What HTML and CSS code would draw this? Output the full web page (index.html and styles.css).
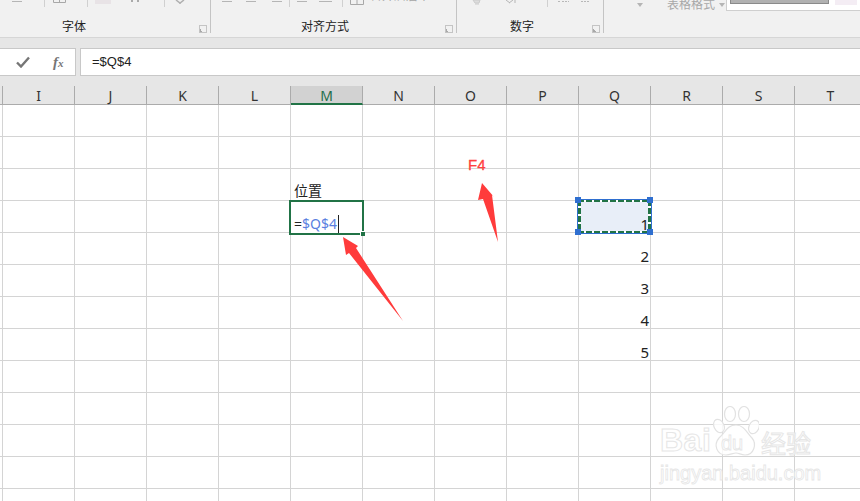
FILE: index.html
```html
<!DOCTYPE html>
<html lang="zh-CN">
<head>
  <meta charset="UTF-8">
  <meta name="viewport" content="width=device-width, initial-scale=1.0">
  <title>Excel F4</title>
  <link rel="stylesheet" href="styles.css">
</head>
<body>

  <!-- Ribbon, cut off at the top -->
  <div class="ribbon">
    <div class="group group-font">
      <svg class="tools" width="210" height="19">
        <path d="M12 1.5h10" stroke="#b5b5b5" fill="none"/>
        <path d="M44.5 0v7M87.5 0v7M164.5 0v7" stroke="#d0d0d0" fill="none"/>
        <path d="M53.5 0v2.5h12V0M59.5 0v2.5" stroke="#a8a8a8" fill="none"/>
        <rect x="95" y="0" width="16" height="4" fill="#e8e3e6"/>
        <path d="M132 0v2M138 0v2" stroke="#aaa" stroke-width="2" fill="none"/>
        <path d="M176 0l4 3 4-3M180 3v1" stroke="#b0b0b0" stroke-width="1.5" fill="none"/>
      </svg>
      <div class="group-label">字体</div>
      <span class="launcher"></span>
    </div>
    <div class="group group-align">
      <svg class="tools" width="160" height="19">
        <path d="M11 1.5h10M35 1.5h10M61 1.5h10" stroke="#b5b5b5" fill="none"/>
        <path d="M78.5 0v7M131.5 0v7" stroke="#d0d0d0" fill="none"/>
        <path d="M86 1.5h10M108 1.5h13" stroke="#b5b5b5" fill="none"/>
        <path d="M139.5 0v4.5h13V0M146 0v4.5" stroke="#a8a8a8" fill="none"/>
      </svg>
      <span class="merge-label">合并后居中</span>
      <div class="group-label">对齐方式</div>
      <span class="launcher"></span>
    </div>
    <div class="group group-number">
      <svg class="tools" width="146" height="19">
        <path d="M16 0h7l-1 3h-4zM18 4h4" stroke="#ccc" fill="#ddd"/>
        <path d="M49 0l4 3M58 0v3M52 3l4-3" stroke="#b5b5b5" fill="none"/>
        <path d="M90.5 0v7" stroke="#d0d0d0" fill="none"/>
        <path d="M101 1.5h2M105 1.5h7M124 1.5h8" stroke="#b8b8b8" stroke-dasharray="2 1" fill="none"/>
      </svg>
      <div class="group-label">数字</div>
      <span class="launcher"></span>
    </div>
    <div class="group-styles">
      <span class="caret-down first-caret"></span>
      <span class="table-format">表格格式</span>
      <span class="caret-down"></span>
      <div class="gallery">
        <span class="gallery-gray"></span>
        <span class="gallery-pink"></span>
      </div>
    </div>
  </div>

  <!-- Formula bar -->
  <div class="formula-bar">
    <div class="formula-buttons">
      <svg width="14" height="12" viewBox="0 0 14 12"><path d="M1 6.5l4 4L13 1.5" stroke="#767676" stroke-width="2.4" fill="none"/></svg>
      <span class="fx">f<small>x</small></span>
    </div>
    <div class="formula-input">=$Q$4</div>
  </div>

  <!-- Column headers -->
  <div class="col-headers">
    <span class="col-stub"></span>
    <span class="col-head">I</span>
    <span class="col-head">J</span>
    <span class="col-head">K</span>
    <span class="col-head">L</span>
    <span class="col-head col-active">M</span>
    <span class="col-head">N</span>
    <span class="col-head">O</span>
    <span class="col-head">P</span>
    <span class="col-head">Q</span>
    <span class="col-head">R</span>
    <span class="col-head">S</span>
    <span class="col-head">T</span>
  </div>

  <!-- Cells -->
  <div class="sheet">
    <div class="cell col-m row-3">位置</div>
    <div class="cell col-m row-4">
      <div class="edit-box">
        <span class="edit-eq">=</span><span class="edit-ref">$Q$4</span><span class="edit-caret"></span>
        <span class="fill-handle"></span>
      </div>
    </div>
    <div class="cell num col-q row-4">
      <div class="marching">
        <span class="handle h-tl"></span>
        <span class="handle h-tr"></span>
        <span class="handle h-bl"></span>
        <span class="handle h-br"></span>
      </div>
      <span class="num-text">1</span>
    </div>
    <div class="cell num col-q row-5">2</div>
    <div class="cell num col-q row-6">3</div>
    <div class="cell num col-q row-7">4</div>
    <div class="cell num col-q row-8">5</div>

    <!-- Annotations on top of the sheet -->
    <div class="f4-note">F4</div>
    <svg class="arrows" width="860" height="396" viewBox="0 105 860 396">
      <polygon points="343,237 358,246 356,248 403,321 349,253 346,255" fill="#ff3b3b"/>
      <polygon points="482,183 494,197 492,195 498,242 483,199 478,200" fill="#ff3b3b"/>
    </svg>

    <!-- Watermark -->
    <div class="watermark">
      <div class="wm-top">
        <span class="wm-bai">Bai</span>
        <div class="wm-paw">
          <svg width="46" height="52" viewBox="0 0 46 52">
            <g fill="#fff" fill-opacity="0.8" stroke="#e2e2e2" stroke-width="1.2">
              <ellipse cx="6" cy="20" rx="5" ry="7" transform="rotate(-25 6 20)"/>
              <ellipse cx="17" cy="8" rx="5.5" ry="7.5"/>
              <ellipse cx="31" cy="8" rx="5.5" ry="7.5"/>
              <ellipse cx="41" cy="21" rx="5" ry="7" transform="rotate(25 41 21)"/>
              <path d="M23 19c8 0 11 8 16 13 5 6 2 17-7 17-4 0-6-2-9-2s-6 2-10 2C4 49 0 39 6 32c6-5 8-13 17-13z"/>
            </g>
          </svg>
          <span class="wm-du">du</span>
        </div>
        <span class="wm-cn">经验</span>
      </div>
      <div class="wm-url">jingyan.baidu.com</div>
    </div>
  </div>

</body>
</html>
```

FILE: styles.css
```css
html, body {
  margin: 0;
  padding: 0;
}
body {
  width: 860px;
  height: 501px;
  overflow: hidden;
  background-color: #fff;
  font-family: "Noto Sans", "Noto Sans CJK SC", sans-serif;
  color: #222;
}

/* ribbon */
.ribbon {
  display: flex;
  height: 37px;
  background-color: #f1f1f1;
  border-bottom: 1px solid #d6d6d6;
  overflow: hidden;
}
.group {
  position: relative;
  height: 33px;
  border-right: 1px solid #c4c4c4;
}
.group-font { width: 210px; }
.group-align { width: 245px; }
.group-number { width: 146px; }
.group-font .group-label { padding-right: 62px; }
.group-align .group-label { padding-right: 17px; }
.group-number .group-label { padding-right: 16px; }
.tools {
  display: block;
}
.group-label {
  position: absolute;
  left: 0;
  right: 0;
  bottom: -1px;
  text-align: center;
  font-size: 12px;
  line-height: 14px;
}
.launcher {
  position: absolute;
  right: 3px;
  bottom: 0;
  width: 6px;
  height: 6px;
  border: 1px solid #c4c4c4;
  background: linear-gradient(45deg, #a8a8a8 0 25%, transparent 25%);
}
.merge-label {
  position: absolute;
  left: 159px;
  top: -11px;
  font-size: 12px;
  line-height: 14px;
  color: #a5a5a5;
  white-space: nowrap;
}
.group-styles {
  flex: 1;
  display: flex;
  align-items: flex-start;
}
.first-caret {
  margin-left: 33px;
  margin-right: 24px;
}
.caret-down {
  width: 0;
  height: 0;
  margin-top: 3px;
  border-left: 3.5px solid transparent;
  border-right: 3.5px solid transparent;
  border-top: 4px solid #b5b5b5;
}
.table-format {
  font-size: 12px;
  line-height: 12px;
  color: #a8a8a8;
  margin-right: 4px;
  margin-top: -1px;
}
.caret-down:not(.first-caret) {
  margin-right: 1px;
}
.gallery {
  flex: 1;
  display: flex;
  align-items: flex-start;
  height: 10px;
  background-color: #fff;
  border-left: 1px solid #cfcfcf;
  border-bottom: 1px solid #cfcfcf;
}
.gallery-gray {
  width: 97px;
  height: 3px;
  margin-left: 3px;
  background-color: #b1b1b1;
  border: 1px solid #8a8a8a;
  border-top: none;
}
.gallery-pink {
  width: 22px;
  height: 5px;
  margin-left: 6px;
  background-color: #f4edf4;
}

/* formula bar */
.formula-bar {
  display: flex;
  gap: 4px;
  height: 48px;
  padding: 10px 0;
  box-sizing: border-box;
  background-color: #e6e6e6;
}
.formula-buttons {
  display: flex;
  align-items: center;
  width: 76px;
  height: 28px;
  box-sizing: border-box;
  padding-left: 16px;
  gap: 23px;
  background-color: #fff;
  border: 1px solid #c8c8c8;
  border-left: none;
}
.fx {
  font-family: "Liberation Serif", serif;
  font-style: italic;
  font-weight: bold;
  font-size: 15px;
  color: #767676;
}
.fx small {
  font-size: 11px;
}
.formula-input {
  flex: 1;
  height: 28px;
  box-sizing: border-box;
  padding-left: 11px;
  font-family: "Liberation Sans", sans-serif;
  font-size: 13px;
  line-height: 25px;
  background-color: #fff;
  border: 1px solid #c8c8c8;
  border-right: none;
}

/* column headers */
.col-headers {
  display: grid;
  grid-template-columns: 3px repeat(12, 72px);
  height: 19px;
  box-sizing: border-box;
  background-color: #e6e6e6;
  border-bottom: 1px solid #ababab;
}
.col-stub {
  border-right: 1px solid #ababab;
}
.col-head {
  height: 18px;
  box-sizing: border-box;
  text-align: center;
  font-size: 14px;
  line-height: 19px;
  color: #333;
  border-right: 1px solid #ababab;
}
.col-active {
  background-color: #d2d2d2;
  color: #1f6e4a;
  border-bottom: 2px solid #217346;
  height: 19px;
}

/* sheet */
.sheet {
  position: relative;
  display: grid;
  grid-template-columns: 3px repeat(12, 72px);
  grid-template-rows: repeat(13, 32px);
  height: 396px;
  overflow: hidden;
  background-image:
    linear-gradient(to right, #d4d4d4 1px, transparent 1px),
    linear-gradient(to bottom, #d4d4d4 1px, transparent 1px);
  background-size: 72px 32px;
  background-position: 2px 0, 0 31px;
}
.cell {
  position: relative;
  padding: 0 3px;
  font-size: 14px;
  line-height: 20px;
  align-self: end;
  height: 20px;
}
.num {
  text-align: right;
  font-family: "Noto Sans", sans-serif;
  font-size: 15px;
  line-height: 22px;
  padding-right: 2px;
  color: #222;
}
.col-m { grid-column: 6; }
.col-q { grid-column: 10; }
.row-3 { grid-row: 3; }
.row-4 { grid-row: 4; }
.row-5 { grid-row: 5; }
.row-6 { grid-row: 6; }
.row-7 { grid-row: 7; }
.row-8 { grid-row: 8; }

/* cell being edited */
.edit-box {
  position: absolute;
  left: -2px;
  right: -1px;
  bottom: -2px;
  height: 35px;
  box-sizing: border-box;
  padding: 13px 0 0 3px;
  display: flex;
  align-items: center;
  background-color: #fff;
  border: 2px solid #217346;
  font-size: 14px;
  line-height: 18px;
}
.edit-ref {
  color: #5a7fe0;
}
.edit-caret {
  width: 1px;
  height: 18px;
  margin-left: 1px;
  background-color: #222;
}
.fill-handle {
  position: absolute;
  right: -3px;
  bottom: -3px;
  width: 5px;
  height: 5px;
  background-color: #217346;
  border-left: 1px solid #fff;
  border-top: 1px solid #fff;
  box-sizing: border-box;
}

/* copied cell with marching ants */
.marching {
  position: absolute;
  left: -1px;
  right: 0;
  bottom: 0;
  height: 33px;
  background:
    repeating-linear-gradient(to right, #217346 0 6px, #fff 6px 8px) top / 100% 2px no-repeat,
    repeating-linear-gradient(to right, #217346 0 6px, #fff 6px 8px) bottom / 100% 2px no-repeat,
    repeating-linear-gradient(to bottom, #217346 0 6px, #fff 6px 8px) left / 3px 100% no-repeat,
    repeating-linear-gradient(to bottom, #217346 0 6px, #fff 6px 8px) right / 3px 100% no-repeat,
    #e8eef8;
  outline: 1px solid #2f6fd0;
  z-index: 1;
}
.num-text {
  position: relative;
  z-index: 2;
}
.handle {
  position: absolute;
  width: 6px;
  height: 6px;
  background-color: #2f6fd0;
}
.h-tl { left: -3px; top: -3px; }
.h-tr { right: -2px; top: -3px; }
.h-bl { left: -3px; bottom: -2px; }
.h-br { right: -2px; bottom: -2px; }

/* annotations */
.f4-note {
  position: absolute;
  left: 468px;
  top: 50px;
  font-family: "Liberation Sans", sans-serif;
  font-size: 15px;
  line-height: 20px;
  color: #ff4040;
  -webkit-text-stroke: 0.3px #ff4040;
}
.arrows {
  position: absolute;
  left: 0;
  top: 0;
  z-index: 3;
  pointer-events: none;
}

/* watermark */
.watermark {
  position: absolute;
  left: 660px;
  top: 301px;
  width: 156px;
  z-index: 4;
}
.wm-top {
  display: flex;
  align-items: flex-end;
  height: 52px;
}
.wm-bai,
.wm-du,
.wm-cn,
.wm-url {
  color: rgba(255, 255, 255, 0.75);
  -webkit-text-stroke: 1px #e6e6e6;
}
.wm-bai {
  font-family: "Liberation Sans", sans-serif;
  font-weight: bold;
  font-size: 32px;
  line-height: 36px;
  width: 53px;
  letter-spacing: 0.5px;
}
.wm-paw {
  position: relative;
  width: 46px;
  height: 52px;
}
.wm-du {
  position: absolute;
  left: 8px;
  top: 26px;
  font-family: "Liberation Sans", sans-serif;
  font-size: 20px;
  line-height: 22px;
  -webkit-text-stroke-width: 0.8px;
}
.wm-cn {
  font-family: "Noto Sans CJK SC", sans-serif;
  font-size: 25px;
  line-height: 32px;
  margin-left: 2px;
  white-space: nowrap;
}
.wm-url {
  font-family: "Liberation Sans", sans-serif;
  font-size: 20px;
  line-height: 24px;
  margin-top: 3px;
  white-space: nowrap;
  -webkit-text-stroke-width: 0.8px;
}
```
